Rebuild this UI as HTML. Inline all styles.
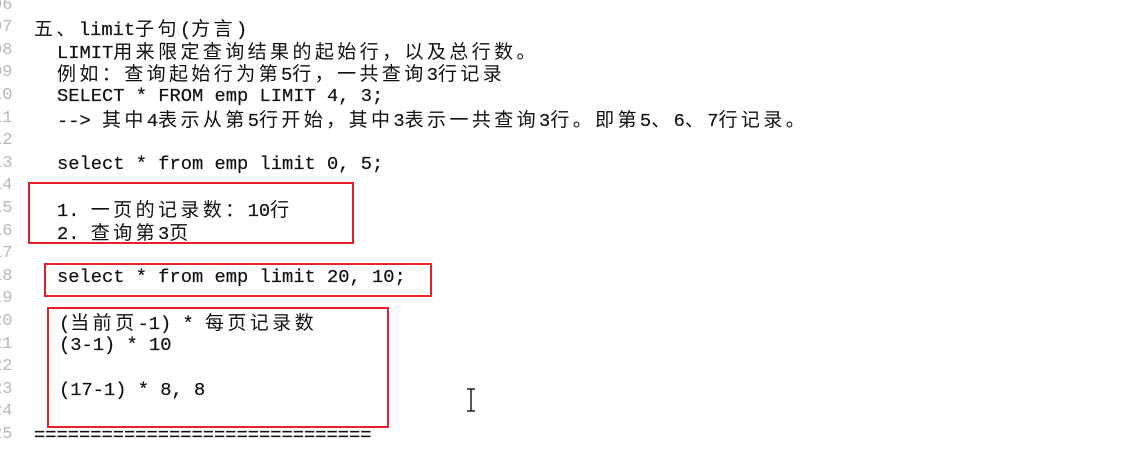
<!DOCTYPE html>
<html><head><meta charset="utf-8"><style>
body{margin:0;width:1134px;height:452px;background:#fff;overflow:hidden;position:relative;font-family:"Liberation Mono","Noto Sans CJK SC",monospace;font-size:18.75px;color:#111}
.l{position:absolute;left:0;height:22.6px;line-height:22.6px;white-space:pre;-webkit-text-stroke:0.2px #111}
.n{position:absolute;left:-8px;color:#b8b8b8;font-size:17px;height:22.6px;line-height:22.6px}
.c{font-family:"Noto Sans CJK SC",sans-serif;font-size:19px;letter-spacing:3.4px;-webkit-text-stroke:0}
.b{position:absolute;border:2px solid #e8202a}
</style></head><body>
<div class="n" style="top:-5px">06</div>
<div class="n" style="top:17px">07</div>
<div class="n" style="top:40px">08</div>
<div class="n" style="top:62px">09</div>
<div class="n" style="top:85px">10</div>
<div class="n" style="top:108px">11</div>
<div class="n" style="top:130px">12</div>
<div class="n" style="top:153px">13</div>
<div class="n" style="top:175px">14</div>
<div class="n" style="top:198px">15</div>
<div class="n" style="top:221px">16</div>
<div class="n" style="top:243px">17</div>
<div class="n" style="top:266px">18</div>
<div class="n" style="top:288px">19</div>
<div class="n" style="top:311px">20</div>
<div class="n" style="top:334px">21</div>
<div class="n" style="top:356px">22</div>
<div class="n" style="top:379px">23</div>
<div class="n" style="top:401px">24</div>
<div class="n" style="top:424px">25</div>

<div class="l" style="top:17px;left:34px"><span class="c">五、</span>limit<span class="c">子句</span>(<span class="c">方言</span>)</div>
<div class="l" style="top:40px;left:57px">LIMIT<span class="c">用来限定查询结果的起始行，以及总行数。</span></div>
<div class="l" style="top:62px;left:57px"><span class="c">例如：查询起始行为第</span>5<span class="c">行，一共查询</span>3<span class="c">行记录</span></div>
<div class="l" style="top:85px;left:57px">SELECT * FROM emp LIMIT 4, 3;</div>
<div class="l" style="top:108px;left:57px">--&gt; <span class="c">其中</span>4<span class="c">表示从第</span>5<span class="c">行开始，其中</span>3<span class="c">表示一共查询</span>3<span class="c">行。即第</span>5<span class="c">、</span>6<span class="c">、</span>7<span class="c">行记录。</span></div>
<div class="l" style="top:153px;left:57px">select * from emp limit 0, 5;</div>
<div class="l" style="top:198px;left:57px">1. <span class="c">一页的记录数：</span>10<span class="c">行</span></div>
<div class="l" style="top:221px;left:57px">2. <span class="c">查询第</span>3<span class="c">页</span></div>
<div class="l" style="top:266px;left:57px">select * from emp limit 20, 10;</div>
<div class="l" style="top:311px;left:59px">(<span class="c">当前页</span>-1) * <span class="c">每页记录数</span></div>
<div class="l" style="top:334px;left:59px">(3-1) * 10</div>
<div class="l" style="top:379px;left:59px">(17-1) * 8, 8</div>
<div class="l" style="top:424px;left:34px">==============================</div>

<div class="b" style="left:28px;top:182px;width:322px;height:58px"></div>
<div class="b" style="left:44px;top:263px;width:384px;height:30px"></div>
<div class="b" style="left:47px;top:307px;width:338px;height:117px"></div>

<svg style="position:absolute;left:465px;top:388px" width="12" height="25"><path d="M2 1h8M6 1v22M2 23h8" stroke="#222" stroke-width="1.5" fill="none"/></svg>
</body></html>
